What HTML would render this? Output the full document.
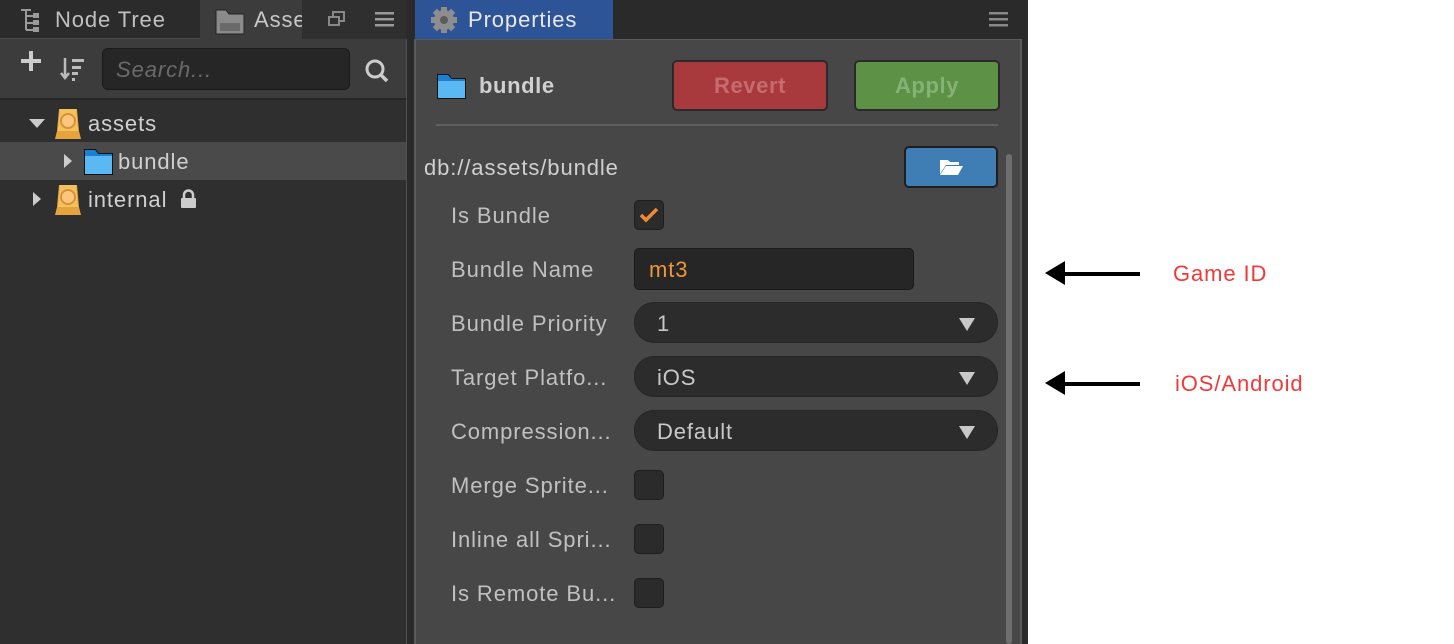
<!DOCTYPE html>
<html><head><meta charset="utf-8"><style>
*{margin:0;padding:0;box-sizing:border-box}
body{width:1454px;height:644px;background:#fff;position:relative;overflow:hidden;font-family:"Liberation Sans",sans-serif;color:#c8c8c8}
.a{position:absolute}
.t{position:absolute;white-space:nowrap;font-size:22px;line-height:26px;letter-spacing:0.9px}
.lab{left:451px;color:#c0c0c0}
.dd{position:absolute;left:634px;width:364px;height:41px;border-radius:20px;background:#2c2c2c;border:1px solid #262626}
.dd span{position:absolute;left:22px;top:8px;font-size:22px;letter-spacing:0.9px;color:#c8c8c8}
.dd i{position:absolute;right:22px;top:15px;width:0;height:0;border-left:8px solid transparent;border-right:8px solid transparent;border-top:13px solid #c8c8c8}
.cb{position:absolute;left:634px;width:30px;height:30px;border-radius:5px;background:#2b2b2b;border:1px solid #1e1e1e}
</style></head><body>
<div class="a" style="left:0;top:0;width:1028px;height:644px;background:#2a2a2a"></div>
<div class="a" style="left:0;top:0;width:200px;height:39px;background:#2b2b2b"></div>
<div class="a" style="left:0;top:38px;width:200px;height:1px;background:#4a4a4a"></div>
<div class="a" style="left:200px;top:0;width:102px;height:39px;background:#3c3c3c"></div>
<div class="a" style="left:302px;top:0;width:104px;height:39px;background:#2f2f2f"></div>
<div class="a" style="left:0;top:39px;width:407px;height:605px;background:#2f2f2f;border-right:1px solid #505050"></div>
<div class="a" style="left:0;top:39px;width:406px;height:59px;background:#3c3c3c"></div>
<div class="a" style="left:0;top:98px;width:406px;height:2px;background:#262626"></div>
<div class="a" style="left:0;top:142px;width:406px;height:38px;background:#4a4a4a"></div>
<svg class="a" style="left:19px;top:6px" width="30" height="28" viewBox="0 0 30 28"><g fill="none" stroke="#9a9a9a" stroke-width="2"><path d="M2 4h10M7 4v20M7 10h8M7 17h8M7 24h8"/></g><rect x="14" y="7" width="6" height="5" fill="#9a9a9a"/><rect x="14" y="14" width="6" height="5" fill="#9a9a9a"/><rect x="14" y="21" width="6" height="5" fill="#9a9a9a"/></svg>
<div class="t" style="left:55px;top:7px;color:#c0c0c0">Node Tree</div>
<svg class="a" style="left:215px;top:8px" width="30" height="28" viewBox="0 0 30 28"><path d="M1 2h10l3 4h15v20H1z" fill="#8a8a8a" stroke="#222" stroke-width="1"/><rect x="5" y="15" width="20" height="8" fill="#6a6a6a"/></svg>
<div class="t" style="left:254px;top:7px;color:#c8c8c8;width:48px;overflow:hidden">Assets</div>
<svg class="a" style="left:327px;top:10px" width="20" height="18" viewBox="0 0 20 18"><rect x="6" y="2" width="11" height="9" fill="none" stroke="#888" stroke-width="2"/><rect x="2" y="7" width="10" height="8" fill="#2f2f2f" stroke="#888" stroke-width="2"/></svg>
<svg class="a" style="left:375px;top:11px" width="20" height="16"><rect y="1" width="19" height="2.5" fill="#9a9a9a"/><rect y="7" width="19" height="2.5" fill="#9a9a9a"/><rect y="13" width="19" height="2.5" fill="#9a9a9a"/></svg>
<div class="a" style="left:21px;top:59px;width:20px;height:4px;background:#ccc"></div>
<div class="a" style="left:29px;top:51px;width:4px;height:20px;background:#ccc"></div>
<svg class="a" style="left:60px;top:56px" width="26" height="26" viewBox="0 0 26 26"><path d="M5 2v20M1 17l4 5 4-5" fill="none" stroke="#bbb" stroke-width="2.5"/><rect x="12" y="3" width="12" height="3" fill="#bbb"/><rect x="12" y="10" width="9" height="3" fill="#bbb"/><rect x="12" y="16" width="6" height="3" fill="#bbb"/><rect x="12" y="22" width="3" height="3" fill="#bbb"/></svg>
<div class="a" style="left:102px;top:48px;width:248px;height:42px;border-radius:6px;background:#262626;border:1px solid #1a1a1a"></div>
<div class="t" style="left:116px;top:57px;font-style:italic;color:#6a6a6a">Search...</div>
<svg class="a" style="left:364px;top:58px" width="26" height="26" viewBox="0 0 26 26"><circle cx="11" cy="11" r="8" fill="none" stroke="#ccc" stroke-width="3"/><path d="M17 17l6 6" stroke="#ccc" stroke-width="3.5"/></svg>
<div class="a" style="left:29px;top:119px;border-left:8px solid transparent;border-right:8px solid transparent;border-top:9px solid #ccc"></div>
<svg class="a" style="left:54px;top:108px" width="28" height="32" viewBox="0 0 28 32"><path d="M5 1h18l2 22 2 8H1l2-8z" fill="#e6a33e"/><path d="M6 1h16l2 22H4z" fill="#f2c25c"/><circle cx="14" cy="13" r="7" fill="#ffc680" stroke="#d8913a" stroke-width="2"/></svg>
<div class="t" style="left:88px;top:111px;color:#d0d0d0">assets</div>
<div class="a" style="left:64px;top:154px;border-top:7px solid transparent;border-bottom:7px solid transparent;border-left:8px solid #ccc"></div>
<svg class="a" style="left:84px;top:149px" width="29" height="26" viewBox="0 0 29 26"><path d="M0.5 0.5h11l3 4h14v21H0.5z" fill="#1c7fcf" stroke="#111"/><rect x="1" y="7" width="27" height="18" fill="#5ab8f2"/></svg>
<div class="t" style="left:118px;top:149px;color:#d0d0d0">bundle</div>
<div class="a" style="left:33px;top:192px;border-top:7px solid transparent;border-bottom:7px solid transparent;border-left:8px solid #ccc"></div>
<svg class="a" style="left:54px;top:184px" width="28" height="32" viewBox="0 0 28 32"><path d="M5 1h18l2 22 2 8H1l2-8z" fill="#e6a33e"/><path d="M6 1h16l2 22H4z" fill="#f2c25c"/><circle cx="14" cy="13" r="7" fill="#ffc680" stroke="#d8913a" stroke-width="2"/></svg>
<div class="t" style="left:88px;top:187px;color:#d0d0d0">internal</div>
<svg class="a" style="left:180px;top:189px" width="17" height="20" viewBox="0 0 17 20"><path d="M4 9V6a4.5 4.5 0 0 1 9 0v3" fill="none" stroke="#ccc" stroke-width="2.5"/><rect x="1" y="9" width="15" height="10" rx="1" fill="#ccc"/></svg>
<div class="a" style="left:415px;top:0;width:607px;height:39px;background:#2a2a2a"></div>
<div class="a" style="left:415px;top:0;width:198px;height:39px;background:#2c5496"></div>
<svg class="a" style="left:430px;top:6px" width="28" height="28" viewBox="0 0 28 28"><g fill="#8d8d8d"><circle cx="14" cy="14" r="10"/><rect x="11" y="1" width="6" height="26"/><rect x="1" y="11" width="26" height="6"/><rect x="11" y="1" width="6" height="26" transform="rotate(45 14 14)"/><rect x="11" y="1" width="6" height="26" transform="rotate(-45 14 14)"/></g><circle cx="14" cy="14" r="4" fill="#5c5c5c"/></svg>
<div class="t" style="left:468px;top:7px;color:#e8e8e8">Properties</div>
<svg class="a" style="left:989px;top:12px" width="19" height="15"><rect width="19" height="2.5" fill="#888"/><rect y="6" width="19" height="2.5" fill="#888"/><rect y="12" width="19" height="2.5" fill="#888"/></svg>
<div class="a" style="left:414px;top:39px;width:608px;height:605px;background:#474747;border-left:2px solid #5a5a5a;border-right:2px solid #5a5a5a;border-top:1px solid #5a5a5a"></div>
<svg class="a" style="left:437px;top:74px" width="29" height="25" viewBox="0 0 29 25"><path d="M0.5 0.5h11l3 4h14v20H0.5z" fill="#1c7fcf" stroke="#111"/><rect x="1" y="7" width="27" height="17" fill="#5ab8f2"/></svg>
<div class="t" style="left:479px;top:73px;font-weight:bold;color:#d0d0d0;letter-spacing:0.6px">bundle</div>
<div class="a" style="left:672px;top:60px;width:156px;height:51px;border-radius:5px;background:#a83a3e;border:2px solid #2a2a2a"></div>
<div class="t" style="left:672px;top:73px;width:156px;text-align:center;font-weight:bold;color:#c46c6f;letter-spacing:0.6px">Revert</div>
<div class="a" style="left:854px;top:60px;width:146px;height:51px;border-radius:5px;background:#5d9146;border:2px solid #2a2a2a"></div>
<div class="t" style="left:854px;top:73px;width:146px;text-align:center;font-weight:bold;color:#87b275;letter-spacing:0.6px">Apply</div>
<div class="a" style="left:436px;top:124px;width:562px;height:2px;background:#5f5f5f"></div>
<div class="t" style="left:424px;top:155px;color:#d0d0d0">db://assets/bundle</div>
<div class="a" style="left:904px;top:146px;width:94px;height:42px;border-radius:5px;background:#3f7eb5;border:2px solid #1e1e1e"></div>
<svg class="a" style="left:939px;top:157px" width="25" height="19" viewBox="0 0 25 19"><path d="M1 3h8l2 2h9v3H7l-6 9z" fill="#fff"/><path d="M7 9h17l-5 9H1z" fill="#fff"/></svg>
<div class="a" style="left:1006px;top:154px;width:6px;height:490px;background:#6e6e6e;border-radius:3px"></div>
<div class="t lab" style="top:203px">Is Bundle</div>
<div class="cb" style="top:200px"></div>
<svg class="a" style="left:638px;top:204px" width="22" height="22" viewBox="0 0 22 22"><path d="M3 11l5 5 11-11" fill="none" stroke="#f08a30" stroke-width="3.5"/></svg>
<div class="t lab" style="top:257px">Bundle Name</div>
<div class="a" style="left:634px;top:248px;width:280px;height:42px;border-radius:5px;background:#262626;border:1px solid #1a1a1a"></div>
<div class="t" style="left:649px;top:257px;color:#f0953a">mt3</div>
<div class="t lab" style="top:311px">Bundle Priority</div>
<div class="dd" style="top:302px"><span>1</span><i></i></div>
<div class="t lab" style="top:365px">Target Platfo...</div>
<div class="dd" style="top:356px"><span>iOS</span><i></i></div>
<div class="t lab" style="top:419px">Compression...</div>
<div class="dd" style="top:410px"><span>Default</span><i></i></div>
<div class="t lab" style="top:473px">Merge Sprite...</div>
<div class="cb" style="top:470px"></div>
<div class="t lab" style="top:527px">Inline all Spri...</div>
<div class="cb" style="top:524px"></div>
<div class="t lab" style="top:581px">Is Remote Bu...</div>
<div class="cb" style="top:578px"></div>
<svg class="a" style="left:1040px;top:255px" width="105" height="140"><path d="M100 19H22" stroke="#000" stroke-width="4"/><path d="M5 18l20-12v24z" fill="#000"/><path d="M100 129H22" stroke="#000" stroke-width="4"/><path d="M5 128l20-12v24z" fill="#000"/></svg>
<div class="t" style="left:1173px;top:261px;color:#f03a3a">Game ID</div>
<div class="t" style="left:1175px;top:371px;color:#f03a3a">iOS/Android</div>
</body></html>
